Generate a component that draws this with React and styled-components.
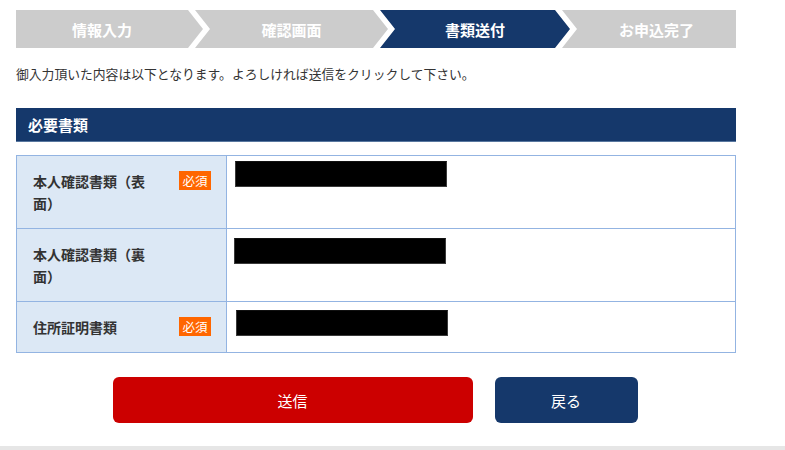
import React from 'react';
import styled, { createGlobalStyle } from 'styled-components';

const GlobalStyle = createGlobalStyle`
  body {
    margin: 0;
    background: #fff;
    font-family: "Noto Sans CJK JP", "Liberation Sans", sans-serif;
    color: #333;
  }
`;

const Page = styled.div`
  width: 785px;
`;

const Content = styled.div`
  width: 720px;
  margin: 0 0 0 16px;
  padding-top: 10px;
`;

const Steps = styled.div`
  display: flex;
  height: 38px;
`;

const clipFor = (pos) => {
  if (pos === 'first') return 'polygon(0 0, calc(100% - 15px) 0, 100% 50%, calc(100% - 15px) 100%, 0 100%)';
  if (pos === 'last') return 'polygon(0 0, 100% 0, 100% 100%, 0 100%, 15px 50%)';
  return 'polygon(0 0, calc(100% - 15px) 0, 100% 50%, calc(100% - 15px) 100%, 0 100%, 15px 50%)';
};

const Step = styled.div`
  flex: none;
  width: ${(p) => p.$width}px;
  margin-left: ${(p) => (p.$pos === 'first' ? 0 : -8)}px;
  padding-left: ${(p) => (p.$pos === 'first' ? 0 : 15)}px;
  padding-right: ${(p) => (p.$pos === 'last' ? 0 : 15)}px;
  box-sizing: border-box;
  background: ${(p) => (p.$active ? '#15386b' : '#cccccc')};
  clip-path: ${(p) => clipFor(p.$pos)};
  color: #fff;
  font-size: 15px;
  font-weight: bold;
  display: flex;
  align-items: center;
  justify-content: center;
`;

const Lead = styled.p`
  margin: 16px 0 0;
  font-size: 12.8px;
  line-height: 20px;
  color: #333;
`;

const SectionHeader = styled.h2`
  margin: 24px 0 0;
  height: 33px;
  border-bottom: 1px solid #58779f;
  background: #15386b;
  color: #fff;
  font-size: 15px;
  font-weight: bold;
  line-height: 33px;
  padding-left: 12px;
`;

const Table = styled.table`
  margin-top: 13px;
  width: 720px;
  border-collapse: collapse;
  border: 1px solid #9dbbe6;
`;

const LabelCell = styled.td`
  width: 210px;
  box-sizing: border-box;
  background: #dce8f5;
  border: 1px solid #93b4e2;
  padding: 14px 15px 14px 16px;
  vertical-align: middle;
`;

const LabelInner = styled.div`
  display: flex;
  justify-content: space-between;
  align-items: flex-start;
`;

const LabelText = styled.span`
  width: 120px;
  font-size: 14px;
  font-weight: bold;
  line-height: 22px;
  color: #333;
`;

const Required = styled.span`
  width: 32px;
  height: 19px;
  margin-top: 1px;
  background: #ff6600;
  color: #fff;
  font-size: 12.5px;
  line-height: 19px;
  text-align: center;
`;

const ValueCell = styled.td`
  border: 1px solid #93b4e2;
  padding: 0 0 0 8px;
  vertical-align: top;
`;

const Redacted = styled.div`
  width: 210px;
  height: 24px;
  margin-top: ${(p) => p.$offset}px;
  margin-left: ${(p) => p.$shift}px;
  background: #000;
  border: 1px solid #3a3a3a;
  border-top-color: #111;
`;

const Actions = styled.div`
  display: flex;
  justify-content: center;
  gap: 22px;
  margin-top: 24px;
  padding-right: 2px;
`;

const ActionButton = styled.button`
  width: ${(p) => p.$width}px;
  height: 46px;
  border: none;
  border-radius: 6px;
  background: ${(p) => p.$color};
  color: #fff;
  font-family: "Noto Sans CJK JP", "Liberation Sans", sans-serif;
  font-size: 15px;
  cursor: pointer;
`;

const Footer = styled.div`
  margin-top: 23px;
  height: 4px;
  background: #e6e6e6;
`;

const steps = [
  { label: '情報入力', width: 187, pos: 'first' },
  { label: '確認画面', width: 193, pos: 'mid' },
  { label: '書類送付', width: 190, pos: 'mid', active: true },
  { label: 'お申込完了', width: 174, pos: 'last' },
];

const rows = [
  { label: '本人確認書類（表面）', required: true, offset: 5, shift: 0 },
  { label: '本人確認書類（裏面）', required: false, offset: 9, shift: -1 },
  { label: '住所証明書類', required: true, offset: 8, shift: 1 },
];

const App = () => {
  return (
    <Page>
      <GlobalStyle />
      <Content>
        <Steps>
          {steps.map((s) => (
            <Step key={s.label} $width={s.width} $pos={s.pos} $active={s.active}>
              {s.label}
            </Step>
          ))}
        </Steps>
        <Lead>御入力頂いた内容は以下となります。よろしければ送信をクリックして下さい。</Lead>
        <SectionHeader>必要書類</SectionHeader>
        <Table>
          <tbody>
            {rows.map((r) => (
              <tr key={r.label}>
                <LabelCell>
                  <LabelInner>
                    <LabelText>{r.label}</LabelText>
                    {r.required && <Required>必須</Required>}
                  </LabelInner>
                </LabelCell>
                <ValueCell>
                  <Redacted $offset={r.offset} $shift={r.shift} />
                </ValueCell>
              </tr>
            ))}
          </tbody>
        </Table>
        <Actions>
          <ActionButton $width={360} $color="#cc0000">送信</ActionButton>
          <ActionButton $width={143} $color="#15386b">戻る</ActionButton>
        </Actions>
      </Content>
      <Footer />
    </Page>
  );
};

export default App;
